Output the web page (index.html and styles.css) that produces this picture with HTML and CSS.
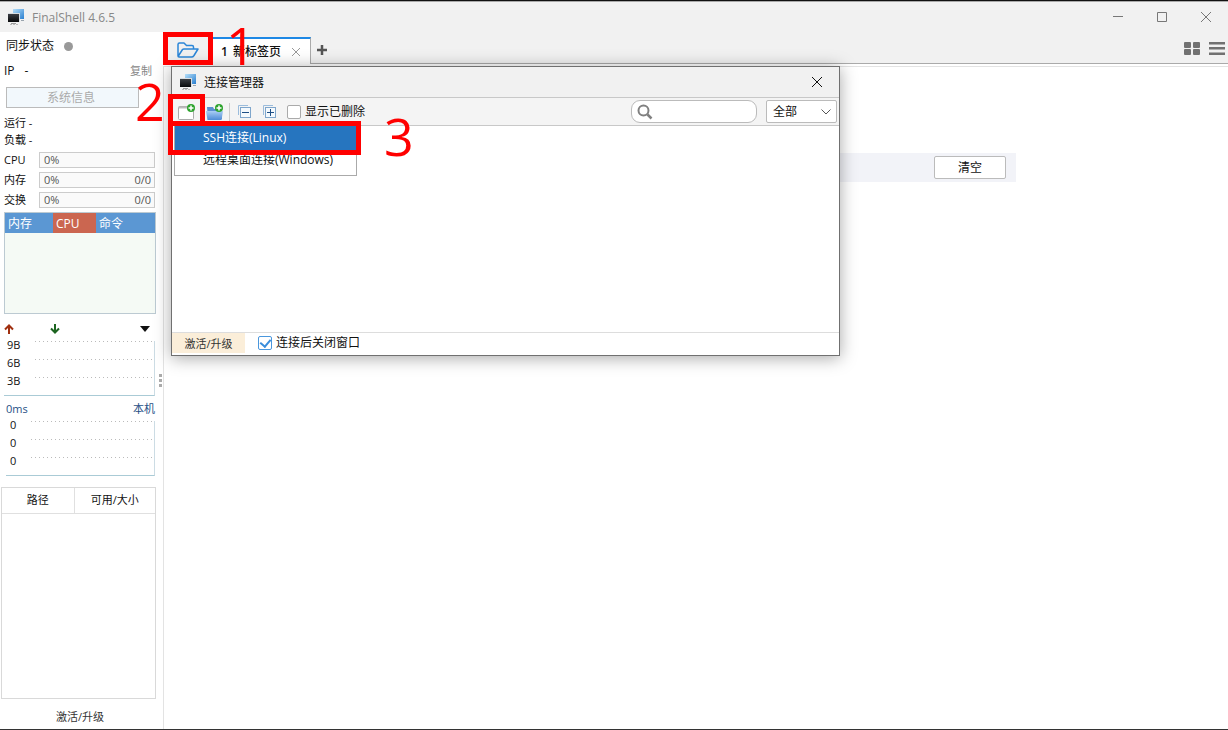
FILE: index.html
```
<!DOCTYPE html>
<html lang="zh-CN">
<head>
    <meta charset="UTF-8">
    <meta name="viewport" content="width=device-width, initial-scale=1.0">
    <title>FinalShell 4.6.5</title>
    <link rel="stylesheet" href="styles.css">
</head>
<body>
    <!-- shared logo -->
    <svg class="defs" width="0" height="0">
        <defs>
            <linearGradient id="screenBlue" x1="0" y1="0" x2="1" y2="1">
                <stop offset="0" stop-color="#b5def8"/>
                <stop offset="1" stop-color="#2a7fd0"/>
            </linearGradient>
            <linearGradient id="screenDark" x1="0" y1="0" x2="0" y2="1">
                <stop offset="0" stop-color="#3a3d42"/>
                <stop offset="1" stop-color="#08090b"/>
            </linearGradient>
            <linearGradient id="folderBlue" x1="0" y1="0" x2="0" y2="1">
                <stop offset="0" stop-color="#a9cdf5"/>
                <stop offset="1" stop-color="#4f8bd6"/>
            </linearGradient>
            <symbol id="logo" viewBox="0 0 17 17">
                <path d="M5 0h11v10h-11z" fill="url(#screenBlue)"/>
                <path d="M13 11h3v1h-3z" fill="#9aa4ad"/>
                <path d="M0 4h12v9h-12z" fill="#d8dde2"/>
                <path d="M0 5h11v8h-11z" fill="url(#screenDark)"/>
                <path d="M3 14h5v1h-5z" fill="#999"/>
                <path d="M2 15.500h9" stroke="#bbb" stroke-dasharray="2 1"/>
            </symbol>
            <symbol id="plusBadge" viewBox="0 0 8 8">
                <circle cx="4" cy="4" r="4" fill="#2da32d"/>
                <path d="M4 1.500v5M1.500 4h5" stroke="#fff" stroke-width="1.500"/>
            </symbol>
        </defs>
    </svg>

    <div class="window">
        <header class="titlebar">
            <svg class="logo"><use href="#logo"/></svg>
            <h1>FinalShell 4.6.5</h1>
            <div class="window-controls">
                <button type="button" aria-label="最小化"><svg width="12" height="12" viewBox="0 0 12 12"><path d="M1 5.500h10"/></svg></button>
                <button type="button" aria-label="最大化"><svg width="12" height="12" viewBox="0 0 12 12"><path d="M1.500 1.500h9v9h-9z"/></svg></button>
                <button type="button" aria-label="关闭"><svg width="12" height="12" viewBox="0 0 12 12"><path d="M1 1l10 10M11 1l-10 10"/></svg></button>
            </div>
        </header>

        <div class="body">
            <aside class="sidebar">
                <div class="row sync">同步状态 <span class="dot"></span></div>
                <div class="row ip"><span>IP</span><span>-</span><button type="button" class="copy">复制</button></div>
                <button type="button" class="sysinfo" disabled>系统信息</button>
                <div class="stat">运行 -</div>
                <div class="stat">负载 -</div>
                <div class="meter"><span>CPU</span><div class="bar"><span>0%</span></div></div>
                <div class="meter"><span>内存</span><div class="bar"><span>0%</span><span>0/0</span></div></div>
                <div class="meter"><span>交换</span><div class="bar"><span>0%</span><span>0/0</span></div></div>

                <div class="procs">
                    <table>
                        <thead>
                            <tr><th class="mem">内存</th><th class="cpu">CPU</th><th>命令</th></tr>
                        </thead>
                    </table>
                </div>

                <div class="net-head">
                    <svg width="10" height="10" viewBox="0 0 10 10"><path d="M5 10V2M1 5.500l4-4 4 4" fill="none" stroke="#a03010" stroke-width="2"/></svg>
                    <svg width="10" height="10" viewBox="0 0 10 10"><path d="M5 0v8M1 4.500l4 4 4-4" fill="none" stroke="#1c6420" stroke-width="2"/></svg>
                    <svg class="caret" width="10" height="6" viewBox="0 0 10 6"><path d="M0 0h10l-5 6z" fill="#111"/></svg>
                </div>
                <div class="graph">
                    <div class="tick"><span>9B</span></div>
                    <div class="tick"><span>6B</span></div>
                    <div class="tick"><span>3B</span></div>
                </div>
                <div class="ping-head"><span>0ms</span><span>本机</span></div>
                <div class="graph ping">
                    <div class="tick"><span>0</span></div>
                    <div class="tick"><span>0</span></div>
                    <div class="tick"><span>0</span></div>
                </div>

                <div class="disks">
                    <table>
                        <thead>
                            <tr><th class="path">路径</th><th>可用/大小</th></tr>
                        </thead>
                    </table>
                </div>
                <a class="upgrade" href="#">激活/升级</a>
                <div class="grip"><i></i><i></i><i></i></div>
            </aside>

            <main class="main">
                <nav class="tabs">
                    <button type="button" class="open" aria-label="打开连接管理器">
                        <svg width="24" height="18" viewBox="0 0 24 18"><path d="M2 15V3.500Q2 2 3.500 2H8l2.500 2.500H16Q17.500 4.500 17.500 6V8M2 15.500L6.500 8.500Q7 8 8 8H22L18 14.500Q17 16 15.500 16H3Q2 16 2 15" fill="none" stroke="#2b86d8" stroke-width="1.500" stroke-linejoin="round"/></svg>
                    </button>
                    <div class="tab">
                        <span class="num">1</span>
                        <span class="name">新标签页</span>
                        <button type="button" aria-label="关闭标签"><svg width="8" height="8" viewBox="0 0 8 8"><path d="M0 0l8 8M8 0l-8 8" stroke="#999"/></svg></button>
                    </div>
                    <button type="button" class="add" aria-label="新标签"><svg width="10" height="10" viewBox="0 0 10 10"><path d="M5 0v10M0 5h10" stroke="#555" stroke-width="2.500"/></svg></button>
                    <div class="views">
                        <button type="button" aria-label="网格"><svg width="16" height="14" viewBox="0 0 16 14" fill="#717171"><rect width="7" height="6" rx="1"/><rect x="9" width="7" height="6" rx="1"/><rect y="7" width="7" height="6" rx="1"/><rect x="9" y="7" width="7" height="6" rx="1"/></svg></button>
                        <button type="button" aria-label="列表"><svg width="16" height="14" viewBox="0 0 16 14" fill="#717171"><rect width="16" height="2.500"/><rect y="5" width="16" height="2.500"/><rect y="10.500" width="16" height="2.500"/></svg></button>
                    </div>
                </nav>
                <div class="page">
                    <div class="history"><button type="button">清空</button></div>
                </div>
            </main>
        </div>
    </div>

    <section class="dialog" role="dialog" aria-labelledby="dialogTitle">
        <header class="dialog-title">
            <svg class="logo"><use href="#logo"/></svg>
            <h2 id="dialogTitle">连接管理器</h2>
            <button type="button" aria-label="关闭"><svg width="12" height="12" viewBox="0 0 12 12"><path d="M1 1l10 10M11 1l-10 10" stroke="#111"/></svg></button>
        </header>
        <div class="toolbar">
            <button type="button" class="tool" aria-label="新建连接">
                <svg width="18" height="18" viewBox="0 0 18 18"><rect x=".5" y="3.500" width="15" height="13" rx="1" fill="#fff" stroke="#aaa"/><path d="M1 4.500h14" stroke="#bbb" stroke-width="2"/><use href="#plusBadge" x="9" y="1" width="8" height="8"/></svg>
            </button>
            <button type="button" class="tool" aria-label="新建文件夹">
                <svg width="18" height="18" viewBox="0 0 18 18"><path d="M1 4h6l1 2h8v10H2z" fill="#5b8fd0"/><path d="M0 8h17l-1.500 9h-14z" fill="url(#folderBlue)"/><use href="#plusBadge" x="9" y="1" width="8" height="8"/></svg>
            </button>
            <span class="sep"></span>
            <button type="button" class="tool" aria-label="全部折叠">
                <svg width="15" height="15" viewBox="0 0 15 15" fill="none"><path d="M11 1.500H1.500V11" stroke="#9bbcdc"/><rect x="3.500" y="3.500" width="10" height="10" fill="#f4f9fd" stroke="#7fa6cc"/><path d="M5 8.500h7" stroke="#1d4f86"/></svg>
            </button>
            <button type="button" class="tool" aria-label="全部展开">
                <svg width="15" height="15" viewBox="0 0 15 15" fill="none"><path d="M11 1.500H1.500V11" stroke="#9bbcdc"/><rect x="3.500" y="3.500" width="10" height="10" fill="#f4f9fd" stroke="#7fa6cc"/><path d="M5 8.500h7M8.500 5v7" stroke="#1d4f86"/></svg>
            </button>
            <label class="check"><input type="checkbox"> 显示已删除</label>
            <div class="search">
                <svg width="16" height="16" viewBox="0 0 16 16"><circle cx="6.500" cy="6.500" r="5" fill="none" stroke="#808080" stroke-width="2"/><path d="M10.500 10.500l4 4" stroke="#808080" stroke-width="2.500"/></svg>
                <input type="text" aria-label="搜索">
            </div>
            <div class="filter">
                <select aria-label="筛选"><option>全部</option></select>
                <svg width="10" height="6" viewBox="0 0 10 6"><path d="M.5 .5l4.500 4.500 4.500-4.500" fill="none" stroke="#555"/></svg>
            </div>
        </div>
        <div class="list"></div>
        <footer class="dialog-foot">
            <a href="#">激活/升级</a>
            <label class="check"><input type="checkbox" checked> 连接后关闭窗口</label>
        </footer>
        <div class="menu" role="menu">
            <button type="button" role="menuitem" class="active">SSH连接(Linux)</button>
            <button type="button" role="menuitem">远程桌面连接(Windows)</button>
        </div>
    </section>

    <!-- step markers -->
    <div class="mark mark-open"></div>
    <div class="mark mark-new"></div>
    <div class="mark mark-ssh"></div>
    <div class="step step-one">1</div>
    <div class="step step-two">2</div>
    <div class="step step-three">3</div>
</body>
</html>
```
FILE: styles.css
```
* {
    box-sizing: border-box;
}

body {
    margin: 0;
    font-family: "Open Sans", "Noto Sans CJK SC", sans-serif;
    font-size: 12px;
    line-height: 16px;
    color: #111;
    background: #fff;
}

button, input, select {
    font: inherit;
    color: inherit;
}

button {
    padding: 0;
    border: none;
    background: none;
    cursor: pointer;
}

svg {
    display: block;
    flex-shrink: 0;
}

a {
    color: #333;
    text-decoration: none;
}

h1, h2 {
    margin: 0;
    font-size: 12px;
    font-weight: normal;
}

table {
    width: 100%;
    border-collapse: collapse;
    table-layout: fixed;
}

th {
    padding: 0;
    font-weight: normal;
}

.defs {
    position: absolute;
}

.logo {
    width: 17px;
    height: 17px;
}

.window {
    display: flex;
    flex-direction: column;
    height: 100vh;
    border-top: 1px solid #111;
    border-bottom: 1px solid #333;
}

.titlebar {
    display: flex;
    align-items: center;
    height: 31px;
    flex-shrink: 0;
    padding-left: 8px;
    background: #f1f1f1;
    border-top: 1px solid #aaa;
}

.titlebar h1 {
    margin-left: 7px;
    padding-top: 2px;
    color: #888;
}

.window-controls {
    display: flex;
    margin-left: auto;
}

.window-controls button {
    display: flex;
    align-items: center;
    justify-content: center;
    width: 44px;
    height: 30px;
}

.window-controls path {
    fill: none;
    stroke: #777;
}

.body {
    display: flex;
    flex: 1;
    min-height: 0;
}

/* sidebar */
.sidebar {
    position: relative;
    display: flex;
    flex-direction: column;
    width: 163px;
    flex-shrink: 0;
    padding: 0 7px 0 4px;
}

.row {
    display: flex;
    align-items: center;
}

.sync {
    height: 28px;
    padding-left: 2px;
}

.dot {
    width: 9px;
    height: 9px;
    margin-left: 10px;
    border-radius: 50%;
    background: #999;
}

.ip {
    height: 22px;
    gap: 10px;
}

.copy {
    margin-left: auto;
    margin-right: 4px;
    font-size: 11px;
    color: #888;
}

.sysinfo {
    height: 21px;
    margin: 5px 17px 7px 2px;
    padding-right: 3px;
    border: 1px solid #bbb;
    background: #f2f8fc;
    color: #aaa;
    line-height: 18px;
}

.stat {
    height: 17px;
    font-size: 11px;
}

.meter {
    display: flex;
    align-items: center;
    height: 20px;
    padding-top: 1px;
    font-size: 11px;
}

.meter > span {
    width: 35px;
}

.bar {
    display: flex;
    flex: 1;
    justify-content: space-between;
    align-items: center;
    height: 16px;
    margin-right: 1px;
    padding: 0 3px 0 4px;
    border: 1px solid #ccc;
    background: #fafafa;
    color: #555;
}

.procs {
    height: 102px;
    margin-top: 3px;
    border: 1px solid #bccad2;
    background: #f5faf5;
}

.procs th {
    height: 20px;
    padding: 2px 0 0 3px;
    text-align: left;
    color: #fff;
    background: #5b97d3;
}

.procs .mem {
    width: 48px;
}

.procs .cpu {
    width: 43px;
    background: #cb6650;
}

.net-head {
    display: flex;
    align-items: center;
    height: 27px;
    gap: 36px;
    padding-top: 3px;
}

.net-head .caret {
    margin-left: auto;
    margin-right: 6px;
}

.graph {
    margin-right: 1px;
    border-right: 1px solid #ccdce4;
    border-bottom: 1px solid #aacbd6;
    font-size: 11px;
    line-height: 8px;
}

.tick {
    height: 18px;
    padding-left: 3px;
    background: repeating-linear-gradient(to right, #bbb 0 1px, transparent 1px 4px) 31px 0 / 118px 1px no-repeat;
}

.ping-head {
    display: flex;
    justify-content: space-between;
    height: 25px;
    padding: 5px 1px 0 2px;
    font-size: 11px;
    color: #1f4f86;
}

.ping {
    margin-left: 2px;
}

.ping .tick {
    padding-left: 4px;
    background-position-x: 25px;
    background-size: 122px 1px;
}

.disks {
    flex: 1;
    margin: 11px 0 0 -3px;
    border: 1px solid #d9d9d9;
}

.disks th {
    height: 25px;
    font-size: 11px;
    border-bottom: 1px solid #e0e0e0;
}

.disks .path {
    width: 72px;
    border-right: 1px solid #e0e0e0;
}

.upgrade {
    height: 30px;
    padding-top: 10px;
    font-size: 11px;
    text-align: center;
}

.grip {
    position: absolute;
    top: 342px;
    right: 1px;
    display: grid;
    gap: 2px;
}

.grip i {
    width: 3px;
    height: 3px;
    background: #aaa;
}

/* main area */
.main {
    display: flex;
    flex-direction: column;
    flex: 1;
    min-width: 0;
}

.tabs {
    display: flex;
    align-items: flex-end;
    height: 32px;
    background: #f1f1f1;
    border-bottom: 1px solid #aaa;
}

.tabs button {
    display: flex;
    align-items: center;
    justify-content: center;
}

.open {
    width: 50px;
    height: 27px;
}

.tab {
    display: flex;
    align-items: center;
    height: 27px;
    margin-bottom: -1px;
    padding: 0 10px 0 8px;
    border-top: 2px solid #1e88e5;
    border-right: 1px solid #aaa;
    background: #fff;
}

.num {
    margin-right: 5px;
    font-weight: 600;
}

.name {
    margin-right: 11px;
    font-weight: 500;
}

.add {
    width: 22px;
    height: 27px;
}

.views {
    display: flex;
    gap: 9px;
    height: 25px;
    margin-left: auto;
    padding: 0 3px;
    align-self: flex-start;
    margin-top: 4px;
}

.page {
    flex: 1;
    margin-top: 2px;
    padding: 86px 20px 0;
    border-top: 1px solid #e3e3e3;
    border-left: 1px solid #e3e3e3;
}

.history {
    display: flex;
    justify-content: flex-end;
    align-items: center;
    max-width: 640px;
    height: 29px;
    margin: 0 auto;
    padding-right: 10px;
    background: #f2f3f8;
}

.history button {
    width: 72px;
    height: 23px;
    border: 1px solid #bbb;
    border-radius: 2px;
    background: #fff;
}

/* connection manager */
.dialog {
    position: absolute;
    top: 66px;
    left: 171px;
    display: flex;
    flex-direction: column;
    width: 669px;
    height: 290px;
    border: 1px solid #707070;
    background: #fff;
    box-shadow: 0 2px 16px rgba(0, 0, 0, 0.35);
}

.dialog-title {
    display: flex;
    align-items: center;
    gap: 7px;
    height: 30px;
    padding: 0 16px 0 8px;
    background: #f1f1f1;
}

.dialog-title h2 {
    padding-top: 2px;
}

.dialog-title button {
    margin-left: auto;
}

.toolbar {
    display: flex;
    align-items: center;
    height: 29px;
    padding: 0 2px 0 6px;
    border-top: 1px solid #c8c8c8;
    border-bottom: 1px solid #c8c8c8;
    background: #f4f4f4;
}

.tool {
    margin-right: 10px;
}

.sep {
    width: 1px;
    height: 18px;
    margin-left: -5px;
    margin-right: 7px;
    background: #ccc;
}

.check {
    display: flex;
    align-items: center;
    gap: 4px;
}

.check input {
    display: grid;
    place-items: center;
    width: 14px;
    height: 14px;
    margin: 0;
    appearance: none;
    border: 1px solid #aaa;
    border-radius: 2px;
    background: #fff;
}

.check input:checked {
    border-color: #4a97dd;
}

.check input:checked::after {
    content: "";
    width: 5px;
    height: 8px;
    margin-bottom: 2px;
    border: solid #3a8ddb;
    border-width: 0 2px 2px 0;
    transform: rotate(40deg);
}

.search {
    display: flex;
    align-items: center;
    width: 126px;
    height: 23px;
    margin-left: auto;
    padding: 0 5px;
    border: 1px solid #bbb;
    border-radius: 9px;
    background: #fff;
}

.search input {
    min-width: 0;
    flex: 1;
    border: none;
    outline: none;
    background: none;
}

.filter {
    position: relative;
    margin-left: 9px;
}

.filter select {
    display: block;
    width: 71px;
    height: 23px;
    padding: 0 6px;
    appearance: none;
    border: 1px solid #bbb;
    border-radius: 2px;
    background: #fff;
}

.filter svg {
    position: absolute;
    top: 9px;
    right: 6px;
    pointer-events: none;
}

.list {
    flex: 1;
}

.dialog-foot {
    display: flex;
    gap: 13px;
    height: 23px;
    padding-bottom: 2px;
    border-top: 1px solid #ddd;
}

.dialog-foot a {
    width: 73px;
    line-height: 22px;
    font-size: 11px;
    text-align: center;
    background: #fbeed9;
}

.menu {
    position: absolute;
    top: 58px;
    left: 2px;
    width: 183px;
    padding-bottom: 5px;
    border: 1px solid #aaa;
    background: #fff;
}

.menu button {
    display: block;
    width: 100%;
    height: 20px;
    padding-left: 28px;
    text-align: left;
}

.menu .active {
    height: 24px;
    color: #fff;
    background: #2675bf;
}

/* step markers */
.mark {
    position: absolute;
    border: 5px solid #f00;
    pointer-events: none;
}

.mark-open {
    top: 32px;
    left: 163px;
    width: 50px;
    height: 33px;
}

.mark-new {
    top: 94px;
    left: 168px;
    width: 37px;
    height: 32px;
}

.mark-ssh {
    top: 121px;
    left: 168px;
    width: 193px;
    height: 34px;
}

.step {
    position: absolute;
    font-family: "Open Sans", sans-serif;
    font-size: 52px;
    font-weight: 500;
    line-height: 50px;
    color: #f00;
    pointer-events: none;
}

.step-one {
    top: 20px;
    left: 226px;
}

.step-two {
    top: 76px;
    left: 135px;
}

.step-three {
    top: 111px;
    left: 384px;
}
```
